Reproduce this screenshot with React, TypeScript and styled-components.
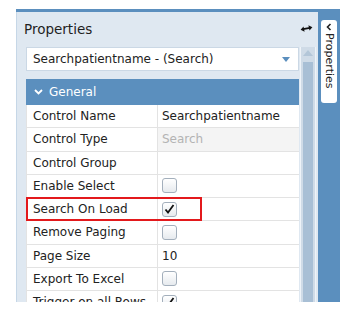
import React from "react";
import styled, { createGlobalStyle } from "styled-components";

const GlobalStyle = createGlobalStyle`
  html, body {
    margin: 0;
    padding: 0;
    background: #ffffff;
    font-family: "DejaVu Sans", Verdana, sans-serif;
  }
`;

const Page = styled.div`
  padding: 9px 0 0 16px;
  width: 354px;
  height: 322px;
  box-sizing: border-box;
`;

const Panel = styled.div`
  display: flex;
  width: 324px;
  height: 293px;
  border-top: 3px solid #5b8fbe;
  box-sizing: border-box;
  overflow: hidden;
`;

const Main = styled.div`
  flex: 1;
  display: flex;
  flex-direction: column;
  background: #dfe8f1;
  border-left: 1px solid #c6d7e7;
  min-width: 0;
`;

const TitleBar = styled.div`
  height: 33px;
  flex-shrink: 0;
  display: flex;
  align-items: center;
  justify-content: space-between;
  padding: 0 5px 0 7px;
`;

const Title = styled.span`
  font-size: 13.5px;
  color: #1f1f1f;
`;

const Body = styled.div`
  flex: 1;
  display: flex;
  gap: 1px;
  padding: 2px 2px 0 9px;
  min-height: 0;
`;

const Content = styled.div`
  width: 273px;
  display: flex;
  flex-direction: column;
`;

const Select = styled.div`
  height: 24px;
  box-sizing: border-box;
  flex-shrink: 0;
  display: flex;
  align-items: center;
  justify-content: space-between;
  padding: 0 8px 0 6px;
  background: #ffffff;
  border: 1px solid #cbd8e5;
  font-size: 12px;
  color: #222;
`;

const Caret = styled.span`
  width: 0;
  height: 0;
  border-left: 4px solid transparent;
  border-right: 4px solid transparent;
  border-top: 5px solid #5b8fbe;
`;

const Section = styled.div`
  margin-top: 8px;
  background: #ffffff;
`;

const SectionHeader = styled.div`
  height: 26px;
  display: flex;
  align-items: center;
  gap: 6px;
  padding-left: 8px;
  background: #5b8fbe;
  color: #ffffff;
  font-size: 12px;
`;

const Row = styled.div`
  position: relative;
  display: grid;
  grid-template-columns: 131px 1fr;
  height: 23.25px;
  box-sizing: border-box;
  border-bottom: 1px solid #e3e3e3;
  border-left: 1px solid #e3e3e3;
  font-size: 12px;
  color: #222;
`;

const Label = styled.div`
  display: flex;
  align-items: center;
  padding-left: 6px;
  border-right: 1px solid #e3e3e3;
  white-space: nowrap;
  overflow: hidden;
`;

const Value = styled.div<{ $disabled?: boolean }>`
  display: flex;
  align-items: center;
  padding-left: 4px;
  background: ${(p) => (p.$disabled ? "#f4f4f4" : "#ffffff")};
  color: ${(p) => (p.$disabled ? "#b3b3b3" : "#222")};
  white-space: nowrap;
`;

const Check = styled.span`
  width: 15px;
  height: 15px;
  box-sizing: border-box;
  border: 1px solid #a3afbc;
  border-radius: 3px;
  background: linear-gradient(#ffffff, #e6eaee);
  display: flex;
  align-items: center;
  justify-content: center;
`;

const Highlight = styled.div`
  position: absolute;
  left: -1px;
  top: -1px;
  width: 176px;
  height: 24px;
  box-sizing: border-box;
  border: 2px solid #e3191c;
  pointer-events: none;
`;

const Scrollbar = styled.div`
  width: 16px;
  display: flex;
  flex-direction: column;
  align-items: center;
  background: #cfdbe7;
  border-left: 1px solid #eef3f8;
  border-right: 1px solid #eef3f8;
  box-sizing: border-box;
`;

const ScrollUp = styled.span`
  margin-top: 3px;
  width: 0;
  height: 0;
  border-left: 5px solid transparent;
  border-right: 5px solid transparent;
  border-bottom: 6px solid #b3c6d8;
`;

const Thumb = styled.div`
  margin-top: 6px;
  width: 10px;
  flex: 1;
  background: #a8bfd5;
`;

const SideBar = styled.div`
  width: 22px;
  flex-shrink: 0;
  background: #5b8fbe;
  padding: 8px 0 0 3px;
  box-sizing: border-box;
`;

const SideTab = styled.div`
  width: 16px;
  height: 83px;
  background: #ffffff;
  border-radius: 3px;
  display: flex;
  flex-direction: column;
  align-items: center;
  padding-top: 3px;
  box-sizing: border-box;
`;

const SideLabel = styled.span`
  writing-mode: vertical-rl;
  font-size: 11px;
  color: #222;
  margin-top: 2px;
`;

const CheckMark = () => (
  <svg width="11" height="10" viewBox="0 0 11 10">
    <path d="M1.5 5.5 L4 8.5 L9.5 1" fill="none" stroke="#111" strokeWidth="1.8" />
  </svg>
);

const rows: { label: string; value?: string; check?: boolean; checked?: boolean; disabled?: boolean; mark?: boolean }[] = [
  { label: "Control Name", value: "Searchpatientname" },
  { label: "Control Type", value: "Search", disabled: true },
  { label: "Control Group", value: "" },
  { label: "Enable Select", check: true },
  { label: "Search On Load", check: true, checked: true, mark: true },
  { label: "Remove Paging", check: true },
  { label: "Page Size", value: "10" },
  { label: "Export To Excel", check: true },
  { label: "Trigger on all Rows", check: true, checked: true },
];

const App: React.FC = () => {
  return (
    <Page>
      <GlobalStyle />
      <Panel>
        <Main>
          <TitleBar>
            <Title>Properties</Title>
            <svg width="13" height="9" viewBox="0 0 13 9">
              <g transform="rotate(-12 6.5 4.5)">
                <path d="M3 4.5 H10" stroke="#111" strokeWidth="1.8" />
                <path d="M0.5 4.5 L4 1.8 L4 7.2 Z" fill="#111" />
                <path d="M12.5 4.5 L9 1.8 L9 7.2 Z" fill="#111" />
              </g>
            </svg>
          </TitleBar>
          <Body>
            <Content>
              <Select>
                <span>Searchpatientname - (Search)</span>
                <Caret />
              </Select>
              <Section>
                <SectionHeader>
                  <svg width="9" height="6" viewBox="0 0 9 6">
                    <path d="M1 1 L4.5 4.5 L8 1" fill="none" stroke="#fff" strokeWidth="1.8" />
                  </svg>
                  General
                </SectionHeader>
                {rows.map((r) => (
                  <Row key={r.label}>
                    <Label>{r.label}</Label>
                    <Value $disabled={r.disabled}>
                      {r.check ? <Check>{r.checked && <CheckMark />}</Check> : r.value}
                    </Value>
                    {r.mark && <Highlight />}
                  </Row>
                ))}
              </Section>
            </Content>
            <Scrollbar>
              <ScrollUp />
              <Thumb />
            </Scrollbar>
          </Body>
        </Main>
        <SideBar>
          <SideTab>
            <svg width="8" height="8" viewBox="0 0 8 8">
              <path d="M5.5 1 L2.5 4 L5.5 7" fill="none" stroke="#222" strokeWidth="1.6" />
            </svg>
            <SideLabel>Properties</SideLabel>
          </SideTab>
        </SideBar>
      </Panel>
    </Page>
  );
};

export default App;
